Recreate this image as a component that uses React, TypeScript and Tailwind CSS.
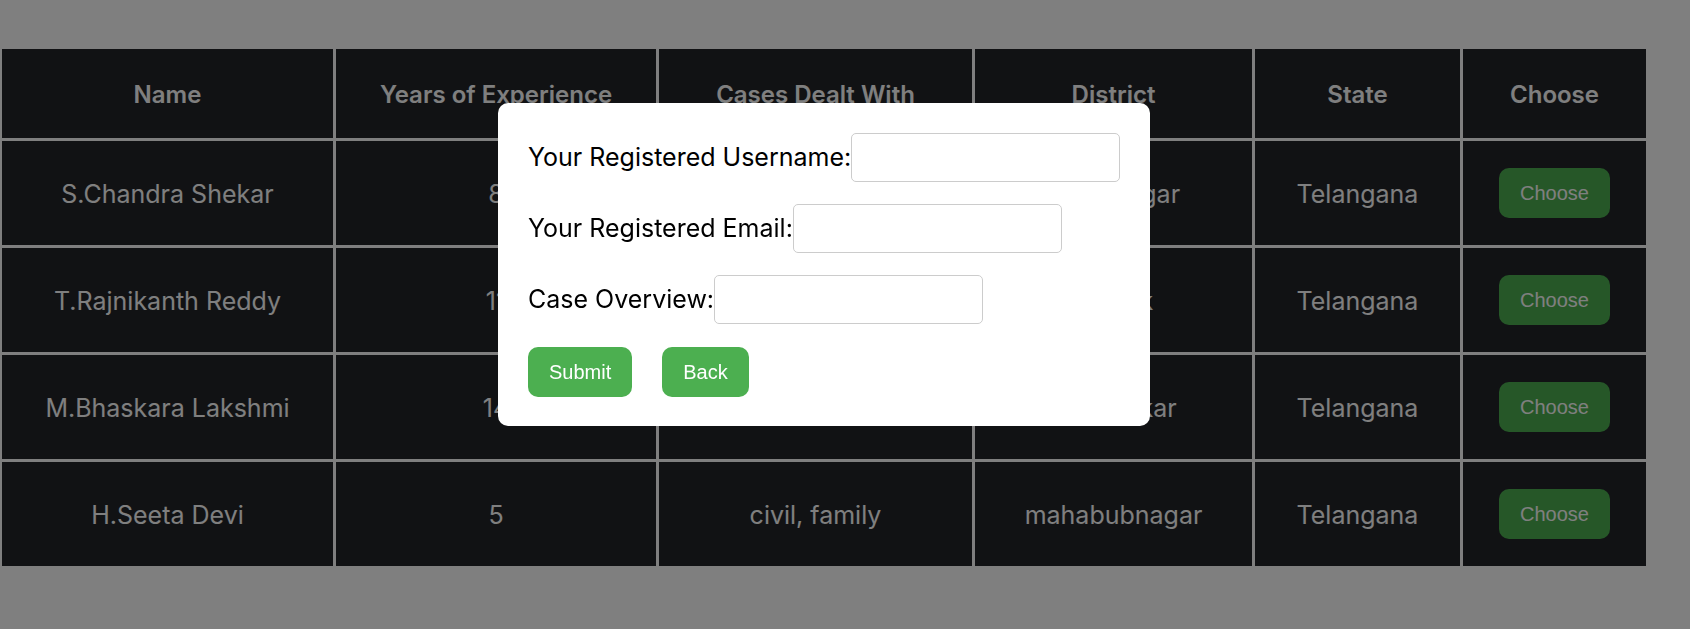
import React from "react";

interface Lawyer {
  name: string;
  years: string;
  cases: string;
  district: string;
  state: string;
}

const lawyers: Lawyer[] = [
  { name: "S.Chandra Shekar", years: "8", cases: "criminal, civil", district: "karimnagar", state: "Telangana" },
  { name: "T.Rajnikanth Reddy", years: "11", cases: "property", district: "medak", state: "Telangana" },
  { name: "M.Bhaskara Lakshmi", years: "14", cases: "family, divorce", district: "bodhankar", state: "Telangana" },
  { name: "H.Seeta Devi", years: "5", cases: "civil, family", district: "mahabubnagar", state: "Telangana" },
];

const headers = [
  { label: "Name", w: "w-[331px]" },
  { label: "Years of Experience", w: "w-[320px]" },
  { label: "Cases Dealt With", w: "w-[313px]" },
  { label: "District", w: "w-[277px]" },
  { label: "State", w: "w-[205px]" },
  { label: "Choose", w: "w-[183px]" },
];

const Field = ({ label }: { label: string }) => {
  return (
    <div className="flex items-center h-[49px]">
      <label className="text-black">{label}</label>
      <input
        type="text"
        className="w-[269px] h-[49px] border border-[#cccccc] rounded-[5px] bg-white outline-none"
      />
    </div>
  );
};

const cell = "h-[104px] p-0 pt-[4px] bg-[#222428]";

const App: React.FC = () => {
  return (
    <div className="min-h-screen bg-white font-['Inter',sans-serif]">
      <div className="pt-[46px]">
        <table className="table-fixed w-[1650px] -ml-px border-separate border-spacing-[3px] bg-white text-center text-[25px] text-white">
          <thead>
            <tr>
              {headers.map((h) => (
                <th key={h.label} className={`${h.w} h-[89px] p-0 pt-[2px] bg-[#222428] text-[24px] font-semibold`}>
                  {h.label}
                </th>
              ))}
            </tr>
          </thead>
          <tbody>
            {lawyers.map((l) => (
              <tr key={l.name}>
                <td className={cell}>{l.name}</td>
                <td className={cell}>{l.years}</td>
                <td className={cell}>{l.cases}</td>
                <td className={cell}>{l.district}</td>
                <td className={cell}>{l.state}</td>
                <td className="h-[104px] p-0 bg-[#222428]">
                  <button className="h-[50px] px-[21px] rounded-[10px] bg-[#4CAF50] text-white text-[20px] font-['Liberation_Sans',Arial,sans-serif]">
                    Choose
                  </button>
                </td>
              </tr>
            ))}
          </tbody>
        </table>
      </div>

      {/* modal overlay */}
      <div className="fixed inset-0 bg-black/50"></div>
      <div className="fixed left-[498px] top-[103px] w-[652px] h-[323px] bg-white rounded-[10px] pt-[30px] pl-[30px] text-[25px]">
        <div className="flex flex-col gap-[22px]">
          <Field label="Your Registered Username:" />
          <Field label="Your Registered Email:" />
          <Field label="Case Overview:" />
          <div className="flex gap-[30px] mt-px">
            <button className="h-[50px] px-[21px] rounded-[10px] bg-[#4CAF50] text-white text-[20px] font-['Liberation_Sans',Arial,sans-serif]">
              Submit
            </button>
            <button className="h-[50px] px-[21px] rounded-[10px] bg-[#4CAF50] text-white text-[20px] font-['Liberation_Sans',Arial,sans-serif]">
              Back
            </button>
          </div>
        </div>
      </div>
    </div>
  );
};

export default App;
